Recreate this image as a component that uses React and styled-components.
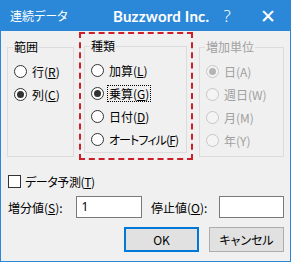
import React from "react";
import styled, { createGlobalStyle } from "styled-components";

const Global = createGlobalStyle`
  html, body { margin: 0; padding: 0; background: #f0f0f0; }
  body {
    font-family: "Noto Sans CJK JP", "Noto Sans", sans-serif;
    font-feature-settings: "palt";
  }
  * { box-sizing: border-box; }
`;

const Window = styled.div`
  width: 291px;
  height: 262px;
  background: #f0f0f0;
  border: 1px solid #2b88d8;
  border-top: none;
  display: flex;
  flex-direction: column;
  color: #000;
  font-size: 12px;
`;

const TitleBar = styled.div`
  height: 31px;
  margin: 0 -1px;
  background: #2b88d8;
  color: #fff;
  display: flex;
  align-items: center;
  padding-left: 10px;
`;

const TitleText = styled.div`
  width: 103px;
  font-size: 12px;
  line-height: 14px;
`;

const Brand = styled.div`
  flex: 1;
  min-width: 0;
  white-space: nowrap;
  font-family: "Lato", "Noto Sans", sans-serif;
  font-weight: 700;
  font-size: 15px;
  letter-spacing: 0.2px;
`;

const TitleButton = styled.div`
  width: ${(p) => p.$w}px;
  flex: none;
  text-align: center;
  font-family: "Noto Sans", sans-serif;
  font-size: ${(p) => p.$size}px;
  font-weight: 300;
`;

const Body = styled.div`
  flex: 1;
  padding: 1px 6px 0 6px;
  display: flex;
  flex-direction: column;
`;

const GroupsRow = styled.div`
  display: flex;
  align-items: flex-start;
`;

const Group = styled.fieldset`
  margin: ${(p) => p.$mt || 0}px 0 0 ${(p) => p.$ml || 0}px;
  width: ${(p) => p.$w}px;
  height: ${(p) => p.$h}px;
  border: 1px solid #dcdcdc;
  padding: 6px 0 0 6px;
  min-width: 0;
`;

const Legend = styled.legend`
  padding: 0 1px;
  margin-left: -1px;
  font-size: 12px;
  line-height: 14px;
  color: ${(p) => (p.$disabled ? "#a0a0a0" : "#000")};
`;

const Highlight = styled.div`
  margin-left: 5px;
  width: 114px;
  height: 128px;
  border: 2px dashed #cc1f2a;
  padding: 5px 0 0 3px;
`;

const RadioRow = styled.div`
  height: 23px;
  display: flex;
  align-items: center;
  color: ${(p) => (p.$disabled ? "#a0a0a0" : "#000")};
`;

const RadioCircle = styled.span`
  width: 13px;
  height: 13px;
  border-radius: 50%;
  border: 1px solid ${(p) => (p.$disabled ? "#c6c6c6" : "#333")};
  background: ${(p) => (p.$disabled ? "#f4f4f4" : "#fff")};
  display: inline-flex;
  align-items: center;
  justify-content: center;
  margin-right: 5px;
  flex: none;
  &::after {
    content: "";
    width: 7px;
    height: 7px;
    border-radius: 50%;
    background: ${(p) => (p.$disabled ? "#b4b4b4" : "#333")};
    display: ${(p) => (p.$checked ? "block" : "none")};
  }
`;

const RadioLabel = styled.span`
  line-height: 15px;
  padding: 0 1px;
  border: 1px ${(p) => (p.$focus ? "dotted #000" : "solid transparent")};
  margin-left: -2px;
  white-space: nowrap;
  letter-spacing: ${(p) => (p.$tight ? "-0.9px" : "0")};
`;

const U = styled.span`
  text-decoration: underline;
  text-underline-offset: 1px;
`;

const CheckRow = styled.div`
  margin-top: 14px;
  display: flex;
  align-items: center;
  height: 14px;
  padding-left: 1px;
  letter-spacing: -0.4px;
`;

const CheckBox = styled.span`
  width: 13px;
  height: 13px;
  border: 1px solid #333;
  background: #fff;
  margin-right: 4px;
  flex: none;
`;

const FieldRow = styled.div`
  margin-top: 8px;
  display: flex;
  align-items: center;
  padding-left: 1px;
`;

const FieldLabel = styled.span`
  width: ${(p) => p.$w}px;
  padding-left: ${(p) => p.$pl || 0}px;
  white-space: nowrap;
`;

const Input = styled.div`
  width: ${(p) => p.$w}px;
  height: 22px;
  border: 1px solid #7a7a7a;
  background: #fff;
  padding-left: 4px;
  line-height: 20px;
  font-family: "Noto Sans", sans-serif;
  font-size: 12px;
`;

const ButtonRow = styled.div`
  margin-top: 9px;
  display: flex;
  justify-content: flex-end;
  gap: 10px;
`;

const Button = styled.div`
  width: 75px;
  height: 25px;
  background: #e1e1e1;
  border: ${(p) => (p.$default ? "2px solid #0078d7" : "1px solid #adadad")};
  display: flex;
  align-items: center;
  justify-content: center;
  font-size: 12px;
`;

const Radio = ({ checked, disabled, focus, tight, children }) => (
  <RadioRow $disabled={disabled}>
    <RadioCircle $checked={checked} $disabled={disabled} />
    <RadioLabel $focus={focus} $tight={tight}>
      {children}
    </RadioLabel>
  </RadioRow>
);

export default function App() {
  return (
    <>
      <Global />
      <Window>
        <TitleBar>
          <TitleText>連続データ</TitleText>
          <Brand>Buzzword Inc.</Brand>
          <TitleButton $w={36} $size={17}>?</TitleButton>
          <TitleButton $w={46} $size={19}>✕</TitleButton>
        </TitleBar>
        <Body>
          <GroupsRow>
            <Group $mt={8} $w={67} $h={117}>
              <Legend>範囲</Legend>
              <Radio>
                行(<U>R</U>)
              </Radio>
              <Radio checked>
                列(<U>C</U>)
              </Radio>
            </Group>
            <Highlight>
              <Group $w={103} $h={114}>
                <Legend>種類</Legend>
                <Radio>
                  加算(<U>L</U>)
                </Radio>
                <Radio checked focus>
                  乗算(<U>G</U>)
                </Radio>
                <Radio>
                  日付(<U>D</U>)
                </Radio>
                <Radio tight>
                  オートフィル(<U>F</U>)
                </Radio>
              </Group>
            </Highlight>
            <Group $mt={8} $ml={6} $w={85} $h={117}>
              <Legend $disabled>増加単位</Legend>
              <Radio checked disabled>日(A)</Radio>
              <Radio disabled>週日(W)</Radio>
              <Radio disabled>月(M)</Radio>
              <Radio disabled>年(Y)</Radio>
            </Group>
          </GroupsRow>
          <CheckRow>
            <CheckBox />
            データ予測(<U>T</U>)
          </CheckRow>
          <FieldRow>
            <FieldLabel $w={69}>
              増分値(<U>S</U>):
            </FieldLabel>
            <Input $w={66}>1</Input>
            <FieldLabel $w={78} $pl={9}>
              停止値(<U>O</U>):
            </FieldLabel>
            <Input $w={65} />
          </FieldRow>
          <ButtonRow>
            <Button $default>OK</Button>
            <Button>キャンセル</Button>
          </ButtonRow>
        </Body>
      </Window>
    </>
  );
}
